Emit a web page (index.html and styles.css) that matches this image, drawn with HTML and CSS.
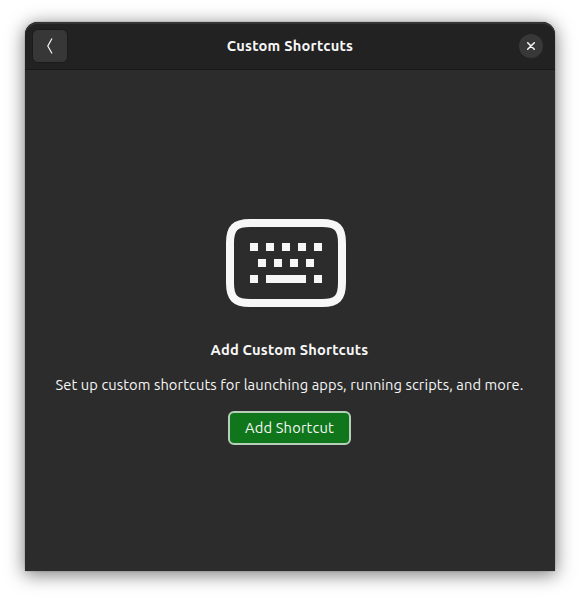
FILE: index.html
```html
<!DOCTYPE html>
<html lang="en">
<head>
<meta charset="utf-8">
<title>Custom Shortcuts</title>
<link rel="stylesheet" href="styles.css">
</head>
<body>
<main class="window">
  <header class="headerbar">
    <button class="back" aria-label="Back">
      <svg width="16" height="16" viewBox="0 0 16 16"><path d="M10 .5 5.800 8 10 15.500"/></svg>
    </button>
    <h1 class="title">Custom Shortcuts</h1>
    <button class="close" aria-label="Close">
      <svg width="10" height="10" viewBox="0 0 10 10"><path d="M1.700 1.700 8.300 8.300M8.300 1.700 1.700 8.300"/></svg>
    </button>
  </header>
  <section class="content">
    <svg class="keyboard" width="120" height="88" viewBox="0 0 120 88">
      <path class="frame" d="M24 4H96C111 4 116 9 116 24V64C116 79 111 84 96 84H24C9 84 4 79 4 64V24C4 9 9 4 24 4Z"/>
      <path class="keys" d="M24 24h8v8h-8zM40 24h8v8h-8zM56 24h8v8h-8zM72 24h8v8h-8zM88 24h8v8h-8zM32 40h8v8h-8zM48 40h8v8h-8zM64 40h8v8h-8zM80 40h8v8h-8zM24 56h8v8h-8zM40 56h40v8h-40zM88 56h8v8h-8z"/>
    </svg>
    <h2 class="heading">Add Custom Shortcuts</h2>
    <p class="description">Set up custom shortcuts for launching apps, running scripts, and more.</p>
    <button class="add">Add Shortcut</button>
  </section>
</main>
</body>
</html>
```
FILE: styles.css
```css
* { box-sizing: border-box; }
body {
  margin: 0;
  padding: 22px 25px 28px;
  height: 599px;
  overflow: hidden;
  background: #fff;
  color: #f7f7f7;
  font-family: Ubuntu, "Noto Sans", sans-serif;
  font-size: 14.667px;
}
h1, h2, p { margin: 0; white-space: nowrap; }
button { margin: 0; padding: 0; font: inherit; color: inherit; }
.window {
  height: 549px;
  display: flex;
  flex-direction: column;
  background: #2c2c2c;
  border-radius: 13px 13px 0 0;
  box-shadow: 0 3px 18px 1px rgba(0, 0, 0, .5), 0 0 1px rgba(0, 0, 0, .7);
}
.headerbar {
  height: 48px;
  flex: none;
  display: grid;
  grid-template-columns: 36px 1fr 24px;
  align-items: center;
  padding: 0 12px 0 7px;
  background: #222;
  border-bottom: 1px solid #191919;
  border-radius: 13px 13px 0 0;
  box-shadow: inset 0 2px 0 #343434;
}
.back {
  width: 36px;
  height: 34px;
  display: grid;
  place-items: center;
  background: #373737;
  border: 1px solid #1b1b1b;
  border-radius: 6px;
}
.back svg, .close svg {
  fill: none;
  stroke: #f7f7f7;
  stroke-width: 1.2;
}
.title {
  padding-right: 7px;
  text-align: center;
  font-size: 14.667px;
  line-height: 20px;
  letter-spacing: .24px;
}
.close {
  width: 24px;
  height: 24px;
  display: grid;
  place-items: center;
  border: 0;
  border-radius: 50%;
  background: #383838;
}
.close svg { stroke-width: 1.5; stroke-linecap: round; }
.content {
  flex: 1;
  display: flex;
  flex-direction: column;
  align-items: center;
  padding: 149px 1px 0 0;
}
.keyboard { margin-right: 7px; }
.frame { fill: none; stroke: #f7f7f7; stroke-width: 8; }
.keys { fill: #f7f7f7; }
.heading {
  margin-top: 33px;
  font-size: 14.667px;
  line-height: 20px;
  letter-spacing: .2px;
}
.description {
  margin-top: 15px;
  line-height: 20px;
  letter-spacing: .1px;
}
.add {
  width: 123px;
  height: 34px;
  margin-top: 16px;
  line-height: 30px;
  letter-spacing: .18px;
  background: #0f761b;
  border: 2px solid #b7cfb9;
  border-radius: 6px;
}
```
